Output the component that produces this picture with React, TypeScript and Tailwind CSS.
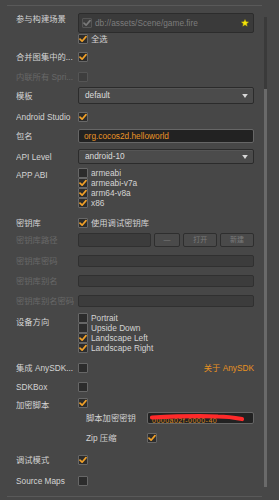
import React from "react";

const F = { fontFamily: '"Liberation Sans", "Noto Sans CJK SC", sans-serif' };

function Check({ on = false, dim = false }: { on?: boolean; dim?: boolean }) {
  return (
    <div
      className={`w-[10px] h-[10px] shrink-0 border rounded-[1px] flex items-center justify-center ${
        dim ? "border-[#555] bg-[#3e3e3e]" : "border-[#676767] bg-[#2c2c2c]"
      }`}
    >
      {on && (
        <svg width="8" height="8" viewBox="0 0 8 8">
          <path
            d="M1 4.2 L3.1 6.2 L7 1.6"
            fill="none"
            stroke={dim ? "#7a7a7a" : "#f0a028"}
            strokeWidth="1.7"
            strokeLinecap="round"
            strokeLinejoin="round"
          />
        </svg>
      )}
    </div>
  );
}

function Row({
  label,
  mt,
  h,
  dim = false,
  children,
  labelTop = false,
  labelPt = 0,
}: {
  label: string;
  mt: string;
  h?: string;
  dim?: boolean;
  children?: React.ReactNode;
  labelTop?: boolean;
  labelPt?: number;
}) {
  return (
    <div className={`flex ${labelTop ? "items-start" : "items-center"} ${mt} ${h ?? ""}`}>
      <div
        className={`w-[62px] shrink-0 whitespace-nowrap overflow-hidden text-[8.3px] leading-[12px] ${
          dim ? "text-[#686868]" : "text-[#d4d4d4]"
        }`}
        style={labelPt ? { paddingTop: labelPt } : undefined}
      >
        {label}
      </div>
      <div className="flex-1 min-w-0 pr-[25px] flex items-center h-full">{children}</div>
    </div>
  );
}

function Dropdown({ text }: { text: string }) {
  return (
    <div className="w-full h-full rounded-[2px] border border-[#2b2b2b] bg-[#4b4b4b] flex items-center justify-between pl-[6px] pr-[5px] shadow-[inset_0_1px_0_#555]">
      <span className="text-[8.3px] text-[#dcdcdc] leading-none">{text}</span>
      <svg width="6" height="4" viewBox="0 0 7 5">
        <path d="M0 0 H7 L3.5 5 Z" fill="#d8d8d8" />
      </svg>
    </div>
  );
}

function DimInput() {
  return <div className="w-full h-full rounded-[2px] border border-[#303030] bg-[#3c3c3c]" />;
}

function CheckList({ items }: { items: [string, boolean][] }) {
  return (
    <div className="flex flex-col">
      {items.map(([t, on]) => (
        <div key={t} className="flex items-center h-[10px] gap-[3px]">
          <Check on={on} />
          <span className="text-[8.3px] leading-[10px] text-[#d4d4d4] whitespace-nowrap">{t}</span>
        </div>
      ))}
    </div>
  );
}

export default function App() {
  return (
    <div className="relative w-[279px] h-[500px] bg-[#474747] overflow-hidden" style={F}>
      <div className="pt-[5px] pl-[16px]">
        <div className="h-px w-[255px] -ml-[9px] bg-[#595959]" />

        <Row label="参与构建场景" mt="mt-[7px]" h="h-[20px]" labelTop>
          <div className="w-full h-full rounded-[2px] border border-[#2c2c2c] bg-[#3a3a3a] flex items-center pl-[3px] pr-[4px] gap-[3px]">
            <Check on dim />
            <span className="text-[8.3px] text-[#7c7c7c] whitespace-nowrap flex-1">db://assets/Scene/game.fire</span>
            <svg width="8" height="8" viewBox="0 0 10 10">
              <path
                d="M5 0.5 L6.3 3.4 L9.5 3.7 L7.1 5.8 L7.8 9 L5 7.3 L2.2 9 L2.9 5.8 L0.5 3.7 L3.7 3.4 Z"
                fill="#f5e60a"
                stroke="#b8a800"
                strokeWidth="0.5"
              />
            </svg>
          </div>
        </Row>
        <Row label="" mt="mt-0" h="h-[11px]">
          <div className="flex items-center gap-[3px]">
            <Check on />
            <span className="text-[8.3px] leading-[10px] text-[#d4d4d4]">全选</span>
          </div>
        </Row>
        <Row label="合并图集中的..." mt="mt-[7px]" h="h-[11px]">
          <Check on />
        </Row>
        <Row label="内联所有 Spri..." mt="mt-[9px]" h="h-[11px]" dim>
          <Check dim />
        </Row>
        <Row label="模板" mt="mt-[5px]" h="h-[17px]">
          <Dropdown text="default" />
        </Row>
        <Row label="Android Studio" mt="mt-[7px]" h="h-[11px]">
          <Check on />
        </Row>
        <Row label="包名" mt="mt-[7px]" h="h-[14px]">
          <div className="w-full h-full rounded-[2px] border border-[#666] bg-[#222] flex items-center pl-[5px]">
            <span className="text-[8.3px] leading-none text-[#ec9526]">org.cocos2d.helloworld</span>
          </div>
        </Row>
        <Row label="API Level" mt="mt-[6px]" h="h-[15px]">
          <Dropdown text="android-10" />
        </Row>
        <Row label="APP ABI" mt="mt-[4px]" labelTop labelPt={1}>
          <CheckList
            items={[
              ["armeabi", false],
              ["armeabi-v7a", true],
              ["arm64-v8a", true],
              ["x86", true],
            ]}
          />
        </Row>
        <Row label="密钥库" mt="mt-[9px]" h="h-[11px]">
          <div className="flex items-center gap-[3px]">
            <Check on />
            <span className="text-[8.3px] leading-[10px] text-[#d4d4d4] whitespace-nowrap">使用调试密钥库</span>
          </div>
        </Row>
        <Row label="密钥库路径" mt="mt-[5px]" h="h-[14px]" dim>
          <div className="flex w-full h-full gap-[3px]">
            <div className="w-[73px] h-full rounded-[2px] border border-[#303030] bg-[#3c3c3c]" />
            <div className="w-[27px] h-full rounded-[2px] border border-[#2e2e2e] bg-[#4a4a4a] flex items-center justify-center text-[7px] text-[#7a7a7a]">
              —
            </div>
            <div className="w-[34px] h-full rounded-[2px] border border-[#2e2e2e] bg-[#4a4a4a] flex items-center justify-center text-[7px] text-[#7a7a7a]">
              打开
            </div>
            <div className="w-[34px] h-full rounded-[2px] border border-[#2e2e2e] bg-[#4a4a4a] flex items-center justify-center text-[7px] text-[#7a7a7a]">
              新建
            </div>
          </div>
        </Row>
        <Row label="密钥库密码" mt="mt-[8px]" h="h-[12px]" dim>
          <DimInput />
        </Row>
        <Row label="密钥库别名" mt="mt-[8px]" h="h-[12px]" dim>
          <DimInput />
        </Row>
        <Row label="密钥库别名密码" mt="mt-[8px]" h="h-[12px]" dim>
          <DimInput />
        </Row>
        <Row label="设备方向" mt="mt-[6px]" labelTop labelPt={3}>
          <CheckList
            items={[
              ["Portrait", false],
              ["Upside Down", false],
              ["Landscape Left", true],
              ["Landscape Right", true],
            ]}
          />
        </Row>
        <Row label="集成 AnySDK..." mt="mt-[10px]" h="h-[10px]">
          <div className="flex w-full items-center justify-between">
            <Check />
            <span className="text-[8.3px] text-[#e8921f] whitespace-nowrap">关于 AnySDK</span>
          </div>
        </Row>
        <Row label="SDKBox" mt="mt-[9px]" h="h-[10px]">
          <Check />
        </Row>
        <Row label="加密脚本" mt="mt-[6px]" h="h-[10px]" labelTop labelPt={1}>
          <Check on />
        </Row>
        <div className="flex items-center mt-[4px] h-[12px] pl-[70px] pr-[25px]">
          <span className="w-[61px] shrink-0 text-[8.3px] text-[#d4d4d4] whitespace-nowrap leading-[12px]">脚本加密密钥</span>
          <div className="relative flex-1 h-full rounded-[2px] border border-[#666] bg-[#222] flex items-center pl-[4px] overflow-hidden">
            <span className="text-[7px] leading-none text-[#d98a22] pt-[5px] tracking-[0.5px]">0000a02f-0000-40</span>
            <svg className="absolute left-0 top-0" width="106" height="12" viewBox="0 0 106 12">
              <path
                d="M4 4.5 C25 3.5, 55 3, 70 3.5 C80 3.5, 86 4.5, 94 6"
                fill="none"
                stroke="#ff2a2a"
                strokeWidth="4.2"
                strokeLinecap="round"
              />
            </svg>
          </div>
        </div>
        <div className="flex items-center mt-[9px] h-[10px] pl-[70px]">
          <span className="w-[61px] shrink-0 text-[8.3px] text-[#d4d4d4] whitespace-nowrap leading-[12px]">Zip 压缩</span>
          <Check on />
        </div>
        <Row label="调试模式" mt="mt-[12px]" h="h-[10px]">
          <Check on />
        </Row>
        <Row label="Source Maps" mt="mt-[11px]" h="h-[10px]">
          <Check />
        </Row>
        <div className="h-px w-[255px] -ml-[9px] mt-[10px] bg-[#595959]" />
      </div>

      <div className="absolute left-[264px] top-[17px] w-[3px] h-[470px] bg-[#3a3a3a]">
        <div className="absolute left-0 top-[72px] w-[3px] h-[398px] bg-[#6a6a6a]" />
      </div>
    </div>
  );
}
